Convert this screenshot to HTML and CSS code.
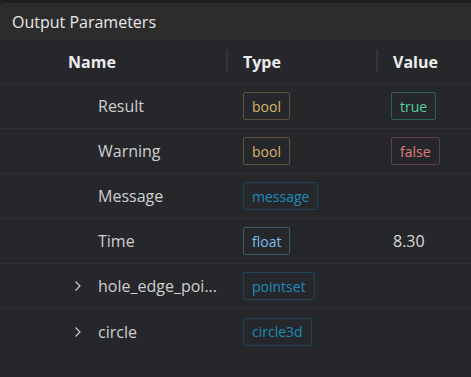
FILE: index.html
```html
<!DOCTYPE html>
<html lang="en">
<head>
    <meta charset="UTF-8">
    <title>Output Parameters</title>
    <link rel="stylesheet" href="styles.css">
</head>
<body>
    <div class="panel">
        <div class="panel-title">Output Parameters</div>
        <div class="params">
            <div class="row head">
                <div class="cell name">Name</div>
                <div class="cell type">Type</div>
                <div class="cell value">Value</div>
            </div>
            <div class="row">
                <div class="cell name"><span class="label">Result</span></div>
                <div class="cell type"><span class="tag tag-bool">bool</span></div>
                <div class="cell value"><span class="tag tag-true">true</span></div>
            </div>
            <div class="row">
                <div class="cell name"><span class="label">Warning</span></div>
                <div class="cell type"><span class="tag tag-bool">bool</span></div>
                <div class="cell value"><span class="tag tag-false">false</span></div>
            </div>
            <div class="row">
                <div class="cell name"><span class="label">Message</span></div>
                <div class="cell type"><span class="tag tag-obj">message</span></div>
                <div class="cell value"></div>
            </div>
            <div class="row">
                <div class="cell name"><span class="label">Time</span></div>
                <div class="cell type"><span class="tag tag-float">float</span></div>
                <div class="cell value"><span class="num">8.30</span></div>
            </div>
            <div class="row">
                <div class="cell name">
                    <svg class="chevron" width="8" height="12" viewBox="0 0 8 12"><path d="M1.5 1.5 L6 6 L1.5 10.5" fill="none" stroke="#c8c8c8" stroke-width="1.2"/></svg>
                    <span class="label">hole_edge_poi...</span>
                </div>
                <div class="cell type"><span class="tag tag-obj">pointset</span></div>
                <div class="cell value"></div>
            </div>
            <div class="row last">
                <div class="cell name">
                    <svg class="chevron" width="8" height="12" viewBox="0 0 8 12"><path d="M1.5 1.5 L6 6 L1.5 10.5" fill="none" stroke="#c8c8c8" stroke-width="1.2"/></svg>
                    <span class="label">circle</span>
                </div>
                <div class="cell type"><span class="tag tag-obj">circle3d</span></div>
                <div class="cell value"></div>
            </div>
        </div>
    </div>
</body>
</html>
```

FILE: styles.css
```css
body {
    margin: 0;
    background: #1e1e22;
    font-family: "Open Sans", "Noto Sans", sans-serif;
    color: #d4d4d4;
    height: 377px;
    overflow: hidden;
}
.panel {
    margin-top: 3px;
    height: 374px;
    background: #26272b;
    border-radius: 4px 0 0 0;
    overflow: hidden;
}
.panel-title {
    height: 37px;
    display: flex;
    align-items: center;
    padding-left: 12px;
    background: #2c2c2c;
    color: #e8e8e8;
    font-size: 16px;
}
.params {
    display: flex;
    flex-direction: column;
}
.row {
    display: grid;
    grid-template-columns: 226px 150px 1fr;
    height: 45px;
    border-bottom: 1px solid #303136;
    box-sizing: border-box;
}
.row.last {
    border-bottom: none;
}
.row.head {
    height: 44px;
    font-weight: 700;
    color: #ececec;
}
.cell {
    display: flex;
    align-items: center;
    font-size: 16px;
    position: relative;
}
.head .cell.name {
    padding-left: 68px;
}
.head .cell + .cell {
    padding-left: 17px;
}
.head .cell + .cell::before {
    content: "";
    position: absolute;
    left: 0;
    top: 10px;
    width: 2px;
    height: 22px;
    background: #34353a;
}
.cell.name {
    padding-left: 74px;
}
.chevron {
    margin-right: 16px;
}
.label {
    color: #cfcfcf;
    white-space: nowrap;
}
.cell.name > .label:first-child {
    margin-left: 24px;
}
.cell.type {
    padding-left: 17px;
}
.cell.value {
    padding-left: 15px;
}
.tag {
    display: inline-flex;
    align-items: center;
    height: 28px;
    box-sizing: border-box;
    padding: 0 8px;
    border: 1px solid;
    border-radius: 2px;
    font-size: 14px;
}
.tag-bool {
    color: #d8b46a;
    border-color: #5f5340;
}
.tag-true {
    color: #4fcfa3;
    border-color: #2d6253;
}
.tag-false {
    color: #e07a80;
    border-color: #653d42;
}
.tag-obj {
    color: #1b8bbd;
    border-color: #1d4558;
}
.tag-float {
    color: #79c0eb;
    border-color: #3b5a6c;
}
.num {
    padding-left: 2px;
    color: #d8d8d8;
}
```
